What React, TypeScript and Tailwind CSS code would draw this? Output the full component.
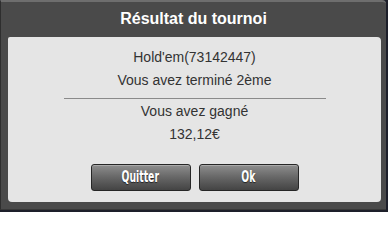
import React from 'react';

const Button: React.FC<{ label: string }> = ({ label }) => (
  <button className="w-[100px] h-[27px] rounded-[3px] border border-[#262626] bg-gradient-to-b from-[#8e8e8e] via-[#666] to-[#444] shadow-[inset_0_1px_0_rgba(255,255,255,0.25)] flex items-center justify-center">
    <span className="inline-block scale-x-[0.62] text-white text-[15px] font-bold leading-none [font-family:'Liberation_Sans_Narrow','DejaVu_Sans',sans-serif] [text-shadow:0_1px_1px_rgba(0,0,0,0.6)]">
      {label}
    </span>
  </button>
);

export default function App() {
  return (
    <div className="w-[388px] h-[212px] bg-[#1d1f2a] [font-family:'Liberation_Sans',Arial,sans-serif]">
      <div className="w-[386px] h-[210px] bg-[#4a4a4a] border-t-2 border-t-[#6e6e6e] border-l border-l-[#2e2e2e] border-b border-b-[#383838] rounded-tr-[4px] flex flex-col">
        {/* Title */}
        <div className="h-[35px] flex items-center justify-center text-white font-bold text-[16px] pb-[1px]">
          Résultat du tournoi
        </div>
        {/* Content panel */}
        <div className="ml-[7px] w-[373px] h-[165px] bg-[#e5e5e5] rounded-[4px] rounded-tl-[2px] flex flex-col items-center pt-[9px] text-[14px] text-[#333]">
          <div className="h-[23px] leading-[23px]">Hold'em(73142447)</div>
          <div className="h-[23px] leading-[23px]">Vous avez terminé 2ème</div>
          <div className="mt-[6px] w-[262px] h-px bg-[#8a8a8a]" />
          <div className="mt-[1px] h-[23px] leading-[23px]">Vous avez gagné</div>
          <div className="h-[23px] leading-[23px]">132,12€</div>
          <div className="mt-[18px] flex gap-[8px]">
            <Button label="Quitter" />
            <Button label="Ok" />
          </div>
        </div>
      </div>
    </div>
  );
}
